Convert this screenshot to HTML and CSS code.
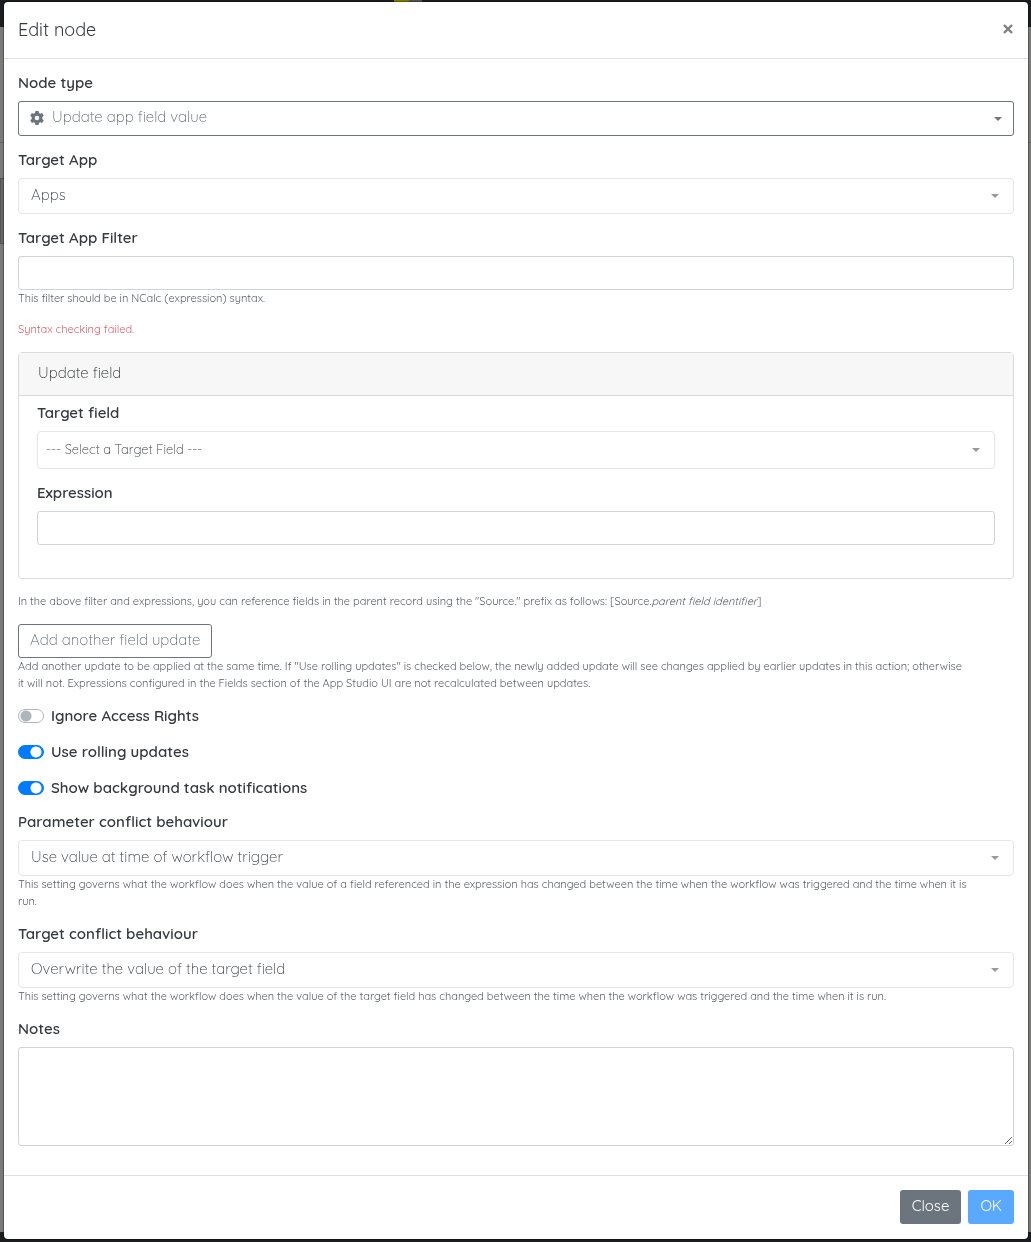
FILE: index.html
```html
<!DOCTYPE html>
<html lang="en">
<head>
    <meta charset="UTF-8">
    <meta name="viewport" content="width=device-width, initial-scale=1.0">
    <title>Edit node</title>
    <link rel="stylesheet" href="styles.css">
</head>
<body>
    <div class="backdrop">
        <div class="backdrop-bar">
            <svg class="backdrop-logo" width="28" height="2" viewBox="0 0 28 2">
                <path d="M0 0h16l-2 2H0z" fill="#8a7a00"/>
                <path d="M16 0h12v2H14z" fill="#55565a"/>
            </svg>
        </div>
        <div class="backdrop-page">
            <div class="backdrop-tabs"></div>
            <div class="backdrop-panel"></div>
        </div>
        <div class="backdrop-footer"></div>
    </div>

    <div class="modal" role="dialog" aria-labelledby="modalTitle">
        <div class="modal-header">
            <h1 class="modal-title" id="modalTitle">Edit node</h1>
            <button type="button" class="close" aria-label="Close dialog">
                <svg width="10" height="10" viewBox="0 0 10 10"><path d="M1 1l8 8M9 1l-8 8" stroke="#7f7f7f" stroke-width="2.400"/></svg>
            </button>
        </div>

        <form class="modal-body">
            <div class="form-group">
                <label for="nodeType">Node type</label>
                <div class="select-icon">
                    <svg class="gear" width="14" height="14" viewBox="0 0 14 14">
                        <path fill="#6c757d" fill-rule="evenodd" d="M5.400 0h3.200l.4 1.900 1.300.75 1.850-.6 1.600 2.750-1.450 1.300v1.800l1.450 1.300-1.600 2.750-1.850-.6-1.300.75-.4 1.900H5.400L5 12.100l-1.300-.75-1.850.6L.25 9.200 1.700 7.900V6.100L.25 4.800l1.600-2.750 1.850.6L5 1.900zM7 4.700a2.300 2.300 0 1 0 0 4.600 2.300 2.300 0 0 0 0-4.600z"/>
                    </svg>
                    <select id="nodeType" class="select select-outline">
                        <option>Update app field value</option>
                    </select>
                </div>
            </div>

            <div class="form-group">
                <label for="targetApp">Target App</label>
                <select id="targetApp" class="select">
                    <option>Apps</option>
                </select>
            </div>

            <div class="form-group">
                <label for="targetFilter">Target App Filter</label>
                <input type="text" id="targetFilter" class="form-control">
                <small class="help">This filter should be in NCalc (expression) syntax.</small>
            </div>

            <small class="help error">Syntax checking failed.</small>

            <div class="card">
                <div class="card-header">Update field</div>
                <div class="card-body">
                    <div class="form-group">
                        <label for="targetField">Target field</label>
                        <select id="targetField" class="select select-small">
                            <option>--- Select a Target Field ---</option>
                        </select>
                    </div>
                    <div class="form-group">
                        <label for="expression">Expression</label>
                        <input type="text" id="expression" class="form-control">
                    </div>
                </div>
            </div>

            <small class="help">In the above filter and expressions, you can reference fields in the parent record using the "Source." prefix as follows: [Source.<i>parent field identifier</i>]</small>

            <div class="form-group">
                <button type="button" class="btn btn-outline">Add another field update</button>
                <small class="help">Add another update to be applied at the same time. If "Use rolling updates" is checked below, the newly added update will see changes applied by earlier updates in this action; otherwise<br> it will not. Expressions configured in the Fields section of the App Studio UI are not recalculated between updates.</small>
            </div>

            <div class="switches">
                <div class="switch-row">
                    <input type="checkbox" id="ignoreRights" class="switch">
                    <label for="ignoreRights">Ignore Access Rights</label>
                </div>
                <div class="switch-row">
                    <input type="checkbox" id="rolling" class="switch" checked>
                    <label for="rolling">Use rolling updates</label>
                </div>
                <div class="switch-row">
                    <input type="checkbox" id="notifications" class="switch" checked>
                    <label for="notifications">Show background task notifications</label>
                </div>
            </div>

            <div class="form-group">
                <label for="paramConflict">Parameter conflict behaviour</label>
                <select id="paramConflict" class="select">
                    <option>Use value at time of workflow trigger</option>
                </select>
                <small class="help">This setting governs what the workflow does when the value of a field referenced in the expression has changed between the time when the workflow was triggered and the time when it is<br> run.</small>
            </div>

            <div class="form-group">
                <label for="targetConflict">Target conflict behaviour</label>
                <select id="targetConflict" class="select">
                    <option>Overwrite the value of the target field</option>
                </select>
                <small class="help">This setting governs what the workflow does when the value of the target field has changed between the time when the workflow was triggered and the time when it is run.</small>
            </div>

            <div class="form-group">
                <label for="notes">Notes</label>
                <textarea id="notes" class="form-control notes"></textarea>
            </div>
        </form>

        <div class="modal-footer">
            <button type="button" class="btn btn-secondary">Close</button>
            <button type="button" class="btn btn-primary">OK</button>
        </div>
    </div>
</body>
</html>
```
FILE: styles.css
```css
* {
    box-sizing: border-box;
}

body {
    margin: 0;
    padding: 2px 3px 3px 4px;
    font-family: Quicksand, Inter, sans-serif;
    font-size: 15px;
    font-weight: 300;
    line-height: 20px;
    color: #212529;
    background-color: #7b7b79;
}

/* dimmed page behind the dialog */
.backdrop {
    position: fixed;
    inset: 0;
    display: flex;
    flex-direction: column;
}

.backdrop-bar {
    height: 27px;
    padding-left: 394px;
    background-color: #1b1d20;
}

.backdrop-logo {
    display: block;
}

.backdrop-page {
    flex: 1;
}

.backdrop-tabs {
    height: 116px;
    border-bottom: 1px solid #666;
}

.backdrop-panel {
    height: 66px;
    margin-top: 35px;
    width: 50%;
    border: 1px solid #555;
    background-color: #686765;
}

.backdrop-footer {
    height: 10px;
    background-color: #1b1d20;
}

.modal {
    position: relative;
    background-color: #fff;
    border-radius: 4px;
    box-shadow: 0 0 1px 1px rgba(0, 0, 0, 0.3);
}

.modal-header {
    display: flex;
    justify-content: space-between;
    align-items: center;
    padding: 14px;
    border-bottom: 1px solid #dee2e6;
}

.modal-title {
    margin: 0;
    font-size: 18px;
    font-weight: 400;
    line-height: 28px;
    color: #343a40;
}

.close {
    display: flex;
    padding: 0 1px 2px;
    border: 0;
    background: none;
}

.modal-body {
    display: flex;
    flex-direction: column;
    gap: 14px;
    padding: 14px 14px 29px;
}

label {
    display: block;
    margin-bottom: 8px;
    font-weight: 600;
    color: #343a40;
}

.form-control {
    display: block;
    width: 100%;
    height: 34px;
    padding: 5px 12px;
    border: 1px solid #ced4da;
    border-radius: 3px;
    font: inherit;
    background-color: #fff;
}

.notes {
    height: 99px;
    resize: vertical;
}

.select {
    display: block;
    width: 100%;
    height: 36px;
    padding: 0 32px 3px 12px;
    border: 1px solid #e4e6e8;
    border-radius: 4px;
    appearance: none;
    font: inherit;
    color: #343a40;
    background: #fff url("data:image/svg+xml,%3Csvg xmlns='http://www.w3.org/2000/svg' width='8' height='4'%3E%3Cpath d='M0 0h8L4 4z' fill='%23999'/%3E%3C/svg%3E") no-repeat right 14px center;
}

.select-outline {
    height: 35px;
    padding-left: 33px;
    border-color: #6c757d;
    border-radius: 3px;
    color: #5c656d;
    background-image: url("data:image/svg+xml,%3Csvg xmlns='http://www.w3.org/2000/svg' width='8' height='4'%3E%3Cpath d='M0 0h8L4 4z' fill='%236c757d'/%3E%3C/svg%3E");
    background-position: right 11px center;
}

.select-small {
    height: 38px;
    padding: 0 32px 2px 8px;
    font-size: 13px;
}

.select-icon {
    position: relative;
}

.gear {
    position: absolute;
    top: 10px;
    left: 12px;
}

.help {
    display: block;
    font-size: 11px;
    font-weight: 400;
    line-height: 17px;
    color: #5a6067;
}

.error {
    color: #e05c68;
}

.card {
    border: 1px solid #dcdcdc;
    border-radius: 4px;
}

.card-header {
    padding: 10px 19px 12px;
    border-bottom: 1px solid #d8d8d8;
    background-color: #f7f7f7;
}

.card-body {
    display: flex;
    flex-direction: column;
    gap: 14px;
    padding: 7px 18px 33px;
}

.switches {
    display: flex;
    flex-direction: column;
    gap: 16px;
}

.switch-row {
    display: flex;
    align-items: center;
    gap: 7px;
}

.switch-row label {
    margin: 0;
}

.switch {
    width: 26px;
    height: 14px;
    margin: 0;
    appearance: none;
    border: 1px solid #adb5bd;
    border-radius: 7px;
    background: radial-gradient(circle at 7px 6px, #adb5bd 5px, #fff 6px);
}

.switch:checked {
    border-color: #007bff;
    background: radial-gradient(circle at 17px 6px, #fff 5px, #007bff 6px);
}

.btn {
    display: block;
    height: 34px;
    padding: 0 11px 3px;
    border: 1px solid transparent;
    border-radius: 3px;
    font: inherit;
}

.btn-outline {
    border-color: #6c757d;
    color: #5c656d;
    background-color: #fff;
}

.btn-secondary {
    font-weight: 400;
    color: #fff;
    background-color: #6c757d;
}

.btn-primary {
    font-weight: 400;
    color: #fff;
    background-color: #59a9ff;
}

.modal-footer {
    display: flex;
    justify-content: flex-end;
    gap: 7px;
    padding: 14px 14px 15px;
    border-top: 1px solid #dee2e6;
}
```
